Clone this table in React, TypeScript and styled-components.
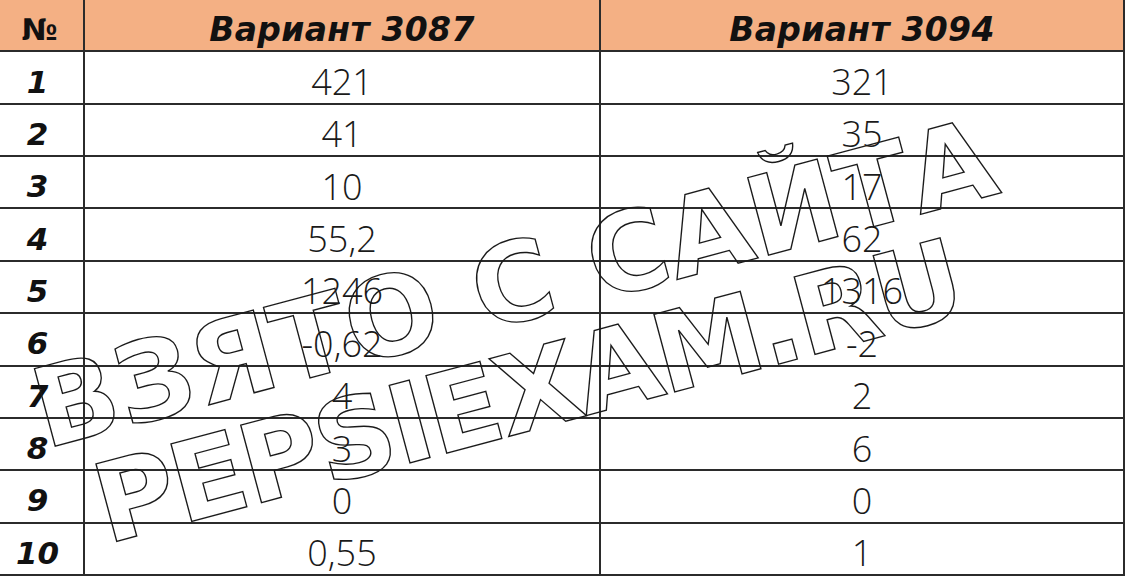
import React from 'react'
import styled, {createGlobalStyle} from 'styled-components'

const GlobalStyle = createGlobalStyle`
  html, body {
    margin: 0;
    padding: 0;
    background: #ffffff;
    overflow: hidden;
  }
`

const Page = styled.div`
  position: relative;
  width: 1125px;
  height: 576px;
  overflow: hidden;
`

const Table = styled.div`
  display: grid;
  grid-template-columns: 83px 516px 1fr;
  grid-template-rows: repeat(11, 52.36px);
  height: 576px;
  border-right: 2px solid #2b2b2b;
  box-sizing: border-box;
`

const Cell = styled.div<{$head?: boolean; $first?: boolean}>`
  display: flex;
  align-items: center;
  justify-content: center;
  box-sizing: border-box;
  min-height: 0;
  padding-top: 9px;
  line-height: 1;
  background: ${p => (p.$head ? '#f4b084' : '#ffffff')};
  border-bottom: 2px solid #2b2b2b;
  border-left: ${p => (p.$first ? 'none' : '2px solid #2b2b2b')};
  color: #111;
`

const HeadText = styled.span`
  font-family: 'DejaVu Sans', sans-serif;
  font-weight: 700;
  font-style: italic;
  font-size: 33px;
  letter-spacing: 0.3px;
`

const NumSign = styled.span`
  font-family: 'DejaVu Sans', sans-serif;
  font-weight: 700;
  font-size: 30px;
  padding-right: 4px;
`

const RowNum = styled.span`
  font-family: 'DejaVu Sans', sans-serif;
  font-weight: 700;
  font-style: italic;
  font-size: 31px;
  padding-right: 8px;
`

const Value = styled.span`
  font-family: 'Open Sans', sans-serif;
  font-weight: 300;
  font-size: 36px;
  color: #1a1a1a;
`

const Watermark = styled.div`
  position: absolute;
  left: 528px;
  top: 336px;
  transform: translate(-50%, -50%) rotate(-15deg);
  display: flex;
  flex-direction: column;
  align-items: center;
  font-family: 'DejaVu Sans', sans-serif;
  font-weight: 700;
  font-size: 110px;
  line-height: 108px;
  white-space: nowrap;
  color: transparent;
  -webkit-text-stroke: 1.4px #1a1a1a;
  pointer-events: none;
`

const MarkLine = styled.span<{$spacing: number; $shift: number}>`
  letter-spacing: ${p => p.$spacing}px;
  margin-right: ${p => p.$shift}px;
`

const rows: [string, string][] = [
  ['421', '321'],
  ['41', '35'],
  ['10', '17'],
  ['55,2', '62'],
  ['1246', '1316'],
  ['-0,62', '-2'],
  ['4', '2'],
  ['3', '6'],
  ['0', '0'],
  ['0,55', '1'],
]

export default function App() {
  return (
    <Page>
      <GlobalStyle />
      <Table>
        <Cell $head $first>
          <NumSign>№</NumSign>
        </Cell>
        <Cell $head>
          <HeadText>Вариант 3087</HeadText>
        </Cell>
        <Cell $head>
          <HeadText>Вариант 3094</HeadText>
        </Cell>
        {rows.map(([a, b], i) => (
          <React.Fragment key={i}>
            <Cell $first>
              <RowNum>{i + 1}</RowNum>
            </Cell>
            <Cell>
              <Value>{a}</Value>
            </Cell>
            <Cell>
              <Value>{b}</Value>
            </Cell>
          </React.Fragment>
        ))}
      </Table>
      <Watermark>
        <MarkLine $spacing={0} $shift={0}>ВЗЯТО С САЙТА</MarkLine>
        <MarkLine $spacing={-3} $shift={30}>PEPSIEXAM.RU</MarkLine>
      </Watermark>
    </Page>
  )
}
